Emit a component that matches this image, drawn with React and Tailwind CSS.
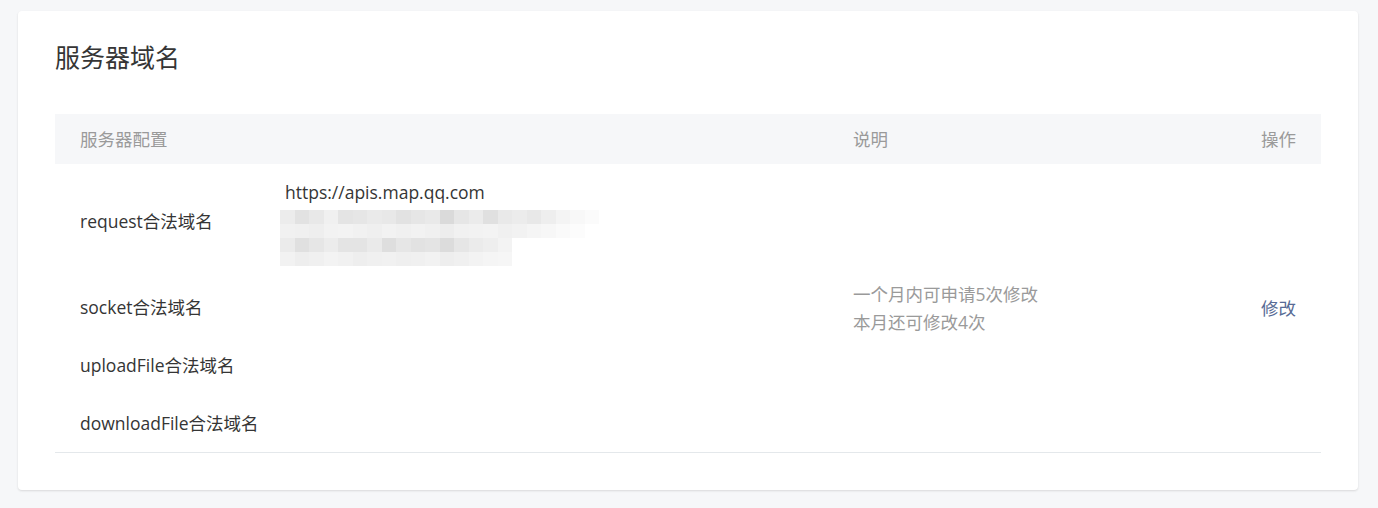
import React from 'react';

const mosaicRows = [
  ['bg-[#ececec]', 'bg-[#e2e2e2]', 'bg-[#e8e8e8]', 'bg-[#f0f0f0]', 'bg-[#e4e4e4]', 'bg-[#e6e6e6]', 'bg-[#eaeaea]', 'bg-[#e8e8e8]', 'bg-[#e2e2e2]', 'bg-[#e6e6e6]', 'bg-[#e9e9e9]', 'bg-[#dadada]', 'bg-[#e6e6e6]', 'bg-[#ebebeb]', 'bg-[#e0e0e0]', 'bg-[#e9e9e9]', 'bg-[#ececec]', 'bg-[#e8e8e8]', 'bg-[#eeeeee]', 'bg-[#f4f4f4]', 'bg-[#f8f8f8]', 'bg-[#fbfbfb]'],
  ['bg-[#f1f1f1]', 'bg-[#f0f0f0]', 'bg-[#eeeeee]', 'bg-[#f2f2f2]', 'bg-[#f3f3f3]', 'bg-[#f1f1f1]', 'bg-[#efefef]', 'bg-[#f2f2f2]', 'bg-[#f0f0f0]', 'bg-[#f2f2f2]', 'bg-[#f0f0f0]', 'bg-[#ededed]', 'bg-[#f1f1f1]', 'bg-[#f2f2f2]', 'bg-[#f3f3f3]', 'bg-[#f0f0f0]', 'bg-[#f2f2f2]', 'bg-[#f5f5f5]', 'bg-[#f7f7f7]', 'bg-[#fafafa]', 'bg-[#fcfcfc]', 'bg-white'],
  ['bg-[#ebebeb]', 'bg-[#e0e0e0]', 'bg-[#e6e6e6]', 'bg-[#ececec]', 'bg-[#e4e4e4]', 'bg-[#e4e4e4]', 'bg-[#eaeaea]', 'bg-[#dedede]', 'bg-[#e6e6e6]', 'bg-[#e2e2e2]', 'bg-[#e4e4e4]', 'bg-[#dcdcdc]', 'bg-[#e6e6e6]', 'bg-[#ebebeb]', 'bg-[#eeeeee]', 'bg-[#f3f3f3]'],
  ['bg-[#f2f2f2]', 'bg-[#eeeeee]', 'bg-[#f0f0f0]', 'bg-[#f3f3f3]', 'bg-[#f1f1f1]', 'bg-[#eeeeee]', 'bg-[#f0f0f0]', 'bg-[#f1f1f1]', 'bg-[#efefef]', 'bg-[#f0f0f0]', 'bg-[#f2f2f2]', 'bg-[#eeeeee]', 'bg-[#f0f0f0]', 'bg-[#f3f3f3]', 'bg-[#f5f5f5]', 'bg-[#f6f6f6]'],
];

const otherDomains = ['socket合法域名', 'uploadFile合法域名', 'downloadFile合法域名'];

const App = () => {
  return (
    <div className="min-h-[508px] bg-[#f6f7f9] pl-[18px] pr-[20px] pt-[11px] pb-[17px] font-['Open_Sans','Noto_Sans_CJK_SC',sans-serif] text-[17.5px] text-[#353535]">
      <div className="bg-white rounded-[4px] shadow-[0_1px_2px_rgba(150,150,150,0.3)] px-[37px] pt-[28px] pb-[37px]">
        {/* Title */}
        <h2 className="text-[25px] leading-[36px] text-[#353535] mb-[39px]">服务器域名</h2>

        {/* Table header */}
        <div className="flex items-center h-[50px] bg-[#f6f7f9] text-[#9a9a9a] px-[25px]">
          <div className="flex-1">服务器配置</div>
          <div className="w-[383px]">说明</div>
          <div className="w-[60px] text-right">操作</div>
        </div>

        {/* Table body */}
        <div className="flex items-center border-b border-[#e4e8eb]">
          <div className="flex-1">
            {/* request row */}
            <div className="flex items-center h-[114px]">
              <div className="w-[230px] pl-[25px]">request合法域名</div>
              <div className="flex flex-col pt-[1px]">
                <div className="leading-[28px] pb-[4px]">https://apis.map.qq.com</div>
                <div className="flex flex-col -ml-[5px]">
                  {mosaicRows.map((row, i) => (
                    <div key={i} className="flex">
                      {row.map((c, j) => (
                        <div key={j} className={`w-[14.5px] h-[14px] ${c}`} />
                      ))}
                    </div>
                  ))}
                </div>
              </div>
            </div>
            {otherDomains.map((name) => (
              <div key={name} className="flex items-center h-[58px] pl-[25px]">
                {name}
              </div>
            ))}
          </div>
          <div className="w-[383px] text-[#9a9a9a] leading-[28px]">
            <div>一个月内可申请5次修改</div>
            <div>本月还可修改4次</div>
          </div>
          <div className="w-[85px] pr-[25px] text-right">
            <a href="#" className="text-[#576b95]">修改</a>
          </div>
        </div>
      </div>
    </div>
  );
};

export default App;
